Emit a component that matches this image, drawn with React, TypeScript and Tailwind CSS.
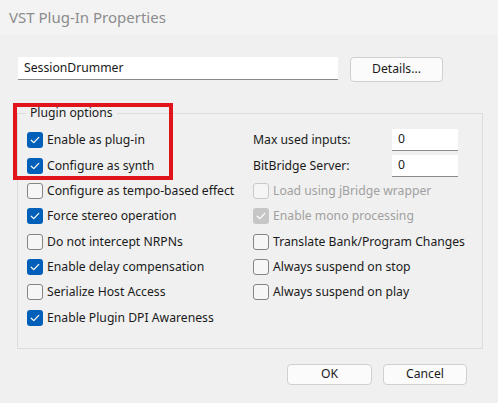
import React from "react";

type Box = { label: string; checked?: boolean; disabled?: boolean };

function Check({ checked, disabled }: { checked?: boolean; disabled?: boolean }) {
  if (checked && !disabled) {
    return (
      <span className="flex h-[16px] w-[16px] shrink-0 items-center justify-center rounded-[3px] bg-[#005fb8]">
        <svg width="10" height="8" viewBox="0 0 10 8" fill="none">
          <path d="M1.2 4.2 L3.8 6.6 L8.8 1.4" stroke="white" strokeWidth="1.2" strokeLinecap="round" strokeLinejoin="round" />
        </svg>
      </span>
    );
  }
  if (checked && disabled) {
    return (
      <span className="flex h-[16px] w-[16px] shrink-0 items-center justify-center rounded-[3px] bg-[#c6c6c6]">
        <svg width="10" height="8" viewBox="0 0 10 8" fill="none">
          <path d="M1.2 4.2 L3.8 6.6 L8.8 1.4" stroke="white" strokeWidth="1.2" strokeLinecap="round" strokeLinejoin="round" />
        </svg>
      </span>
    );
  }
  return (
    <span
      className={
        disabled
          ? "h-[16px] w-[16px] shrink-0 rounded-[3px] border border-[#c9c9c9] bg-[#f5f5f5]"
          : "h-[16px] w-[16px] shrink-0 rounded-[3px] border border-[#858585] bg-[#f6f6f6]"
      }
    />
  );
}

function CheckRow({ b, h }: { b: Box; h: string }) {
  return (
    <div className={`flex items-center gap-[4px] ${h}`}>
      <Check checked={b.checked} disabled={b.disabled} />
      <span className={b.disabled ? "text-[#a0a0a0]" : "text-[#1a1a1a]"}>{b.label}</span>
    </div>
  );
}

const left: Box[] = [
  { label: "Enable as plug-in", checked: true },
  { label: "Configure as synth", checked: true },
  { label: "Configure as tempo-based effect" },
  { label: "Force stereo operation", checked: true },
  { label: "Do not intercept NRPNs" },
  { label: "Enable delay compensation", checked: true },
  { label: "Serialize Host Access" },
  { label: "Enable Plugin DPI Awareness", checked: true },
];

const right: Box[] = [
  { label: "Load using jBridge wrapper", disabled: true },
  { label: "Enable mono processing", checked: true, disabled: true },
  { label: "Translate Bank/Program Changes" },
  { label: "Always suspend on stop" },
  { label: "Always suspend on play" },
];

const heights = ["h-[26px]", "h-[26px]", "h-[24px]", "h-[26px]", "h-[26px]", "h-[24px]", "h-[26px]", "h-[26px]"];

export default function App() {
  return (
    <div
      className="relative h-[403px] w-[498px] overflow-hidden bg-[#f0f0f0] text-[12.2px] text-[#1a1a1a]"
      style={{ fontFamily: '"Noto Sans", "Open Sans", sans-serif' }}
    >
      <div className="flex h-[35px] items-center bg-[#f3f3f3] pl-[9px] text-[15px] text-[#8c8c8c]">
        VST Plug-In Properties
      </div>

      <div className="mt-[22px] flex items-start pl-[18px]">
        <div className="flex h-[23px] w-[320px] items-center border-b border-[#8a8a8a] bg-white pl-[6px]">
          SessionDrummer
        </div>
        <div className="ml-[12px] flex h-[25px] w-[93px] items-center justify-center rounded-[4px] border border-[#d0d0d0] bg-[#fbfbfb]">
          Details...
        </div>
      </div>

      <div className="relative ml-[17px] mt-[31px] h-[236px] w-[466px] border border-[#dcdcdc] pl-[9px] pt-[13px]">
        <span className="absolute left-[8px] top-[-10px] bg-[#f0f0f0] px-[4px] leading-[18px]">Plugin options</span>
        <div className="flex">
          <div className="flex w-[226px] flex-col">
            {left.map((b, i) => (
              <CheckRow key={b.label} b={b} h={heights[i]} />
            ))}
          </div>
          <div className="flex flex-col">
            <div className="flex h-[26px] items-center">
              <span className="w-[139px]">Max used inputs:</span>
              <div className="flex h-[22px] w-[66px] items-center border-b border-[#8a8a8a] bg-white pl-[6px]">0</div>
            </div>
            <div className="flex h-[26px] items-center">
              <span className="w-[139px]">BitBridge Server:</span>
              <div className="flex h-[22px] w-[66px] items-center border-b border-[#8a8a8a] bg-white pl-[6px]">0</div>
            </div>
            {right.map((b, i) => (
              <CheckRow key={b.label} b={b} h={heights[i + 2]} />
            ))}
          </div>
        </div>
      </div>

      <div className="mt-[15px] flex justify-end gap-[11px] pr-[31px]">
        <div className="flex h-[21px] w-[85px] items-center justify-center rounded-[4px] border border-[#d0d0d0] bg-[#fbfbfb]">
          OK
        </div>
        <div className="flex h-[21px] w-[84px] items-center justify-center rounded-[4px] border border-[#d0d0d0] bg-[#fbfbfb]">
          Cancel
        </div>
      </div>

      <div className="absolute left-[13px] top-[103px] h-[77px] w-[160px] border-[4px] border-[#e0141b]" />
    </div>
  );
}
